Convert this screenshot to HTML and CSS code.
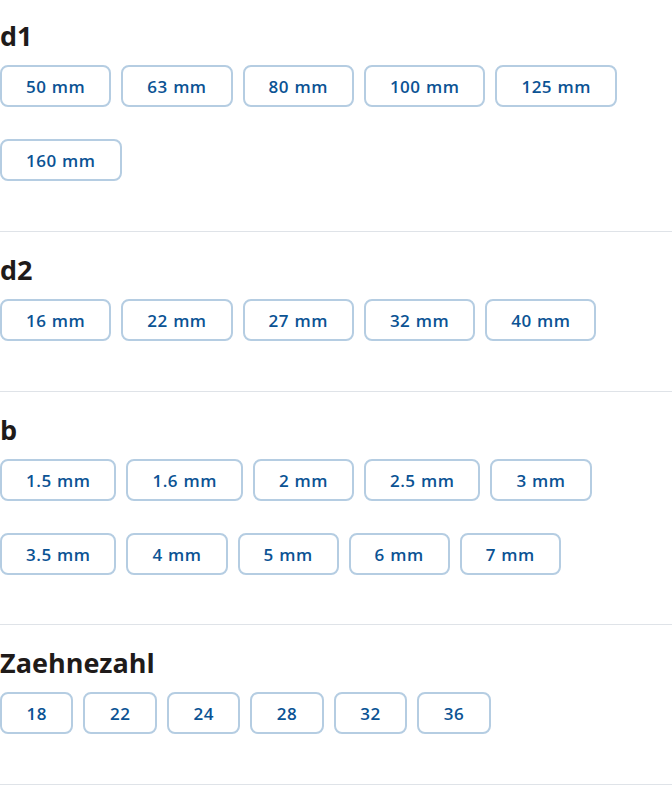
FILE: index.html
```html
<!DOCTYPE html>
<html lang="de">
<head>
<meta charset="utf-8">
<title>Filter</title>
<link rel="stylesheet" href="styles.css">
</head>
<body>
<div class="filters">
  <section class="group">
    <h2 class="group-title">d1</h2>
    <div class="options">
      <button class="opt">50 mm</button>
      <button class="opt">63 mm</button>
      <button class="opt">80 mm</button>
      <button class="opt">100 mm</button>
      <button class="opt">125 mm</button>
      <button class="opt">160 mm</button>
    </div>
  </section>
  <section class="group">
    <h2 class="group-title">d2</h2>
    <div class="options">
      <button class="opt">16 mm</button>
      <button class="opt">22 mm</button>
      <button class="opt">27 mm</button>
      <button class="opt">32 mm</button>
      <button class="opt">40 mm</button>
    </div>
  </section>
  <section class="group group-two-rows">
    <h2 class="group-title">b</h2>
    <div class="options">
      <button class="opt">1.5 mm</button>
      <button class="opt">1.6 mm</button>
      <button class="opt">2 mm</button>
      <button class="opt">2.5 mm</button>
      <button class="opt">3 mm</button>
      <button class="opt">3.5 mm</button>
      <button class="opt">4 mm</button>
      <button class="opt">5 mm</button>
      <button class="opt">6 mm</button>
      <button class="opt">7 mm</button>
    </div>
  </section>
  <section class="group">
    <h2 class="group-title">Zaehnezahl</h2>
    <div class="options">
      <button class="opt opt-num">18</button>
      <button class="opt opt-num">22</button>
      <button class="opt opt-num">24</button>
      <button class="opt opt-num">28</button>
      <button class="opt opt-num">32</button>
      <button class="opt opt-num">36</button>
    </div>
  </section>
</div>
</body>
</html>
```
FILE: styles.css
```css
html, body {
  margin: 0;
  padding: 0;
  background: #ffffff;
}
body {
  font-family: "Open Sans", "Noto Sans", sans-serif;
}
.filters {
  width: 672px;
}
.group {
  padding: 22px 0 50px;
  border-bottom: 1px solid #dfe3e8;
}
.group:first-child {
  padding-top: 20px;
}
.group-two-rows {
  padding-bottom: 49px;
}
.group-title {
  margin: 0 0 13px;
  font-size: 27px;
  line-height: 32px;
  font-weight: 700;
  color: #1f1b1a;
}
.options {
  display: flex;
  flex-wrap: wrap;
  column-gap: 10px;
  row-gap: 32px;
}
.opt {
  box-sizing: border-box;
  height: 42px;
  padding: 0 24px;
  border: 2px solid #b5cde2;
  border-radius: 8px;
  background: #ffffff;
  color: #0b5394;
  font-family: "Open Sans", "Noto Sans", sans-serif;
  font-size: 17px;
  font-weight: 600;
  letter-spacing: 0.5px;
  word-spacing: 0.5px;
  line-height: 1;
  cursor: pointer;
}
.opt-num {
  padding: 0 24.5px;
}
```
